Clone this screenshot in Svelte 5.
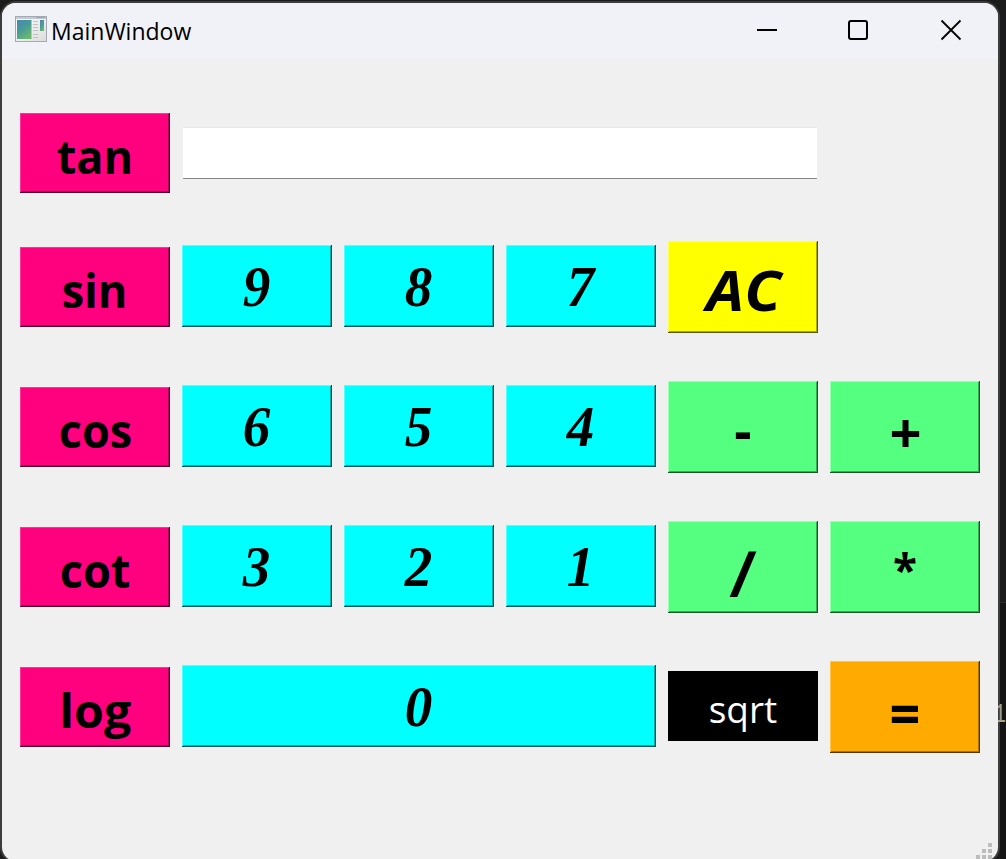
<script>
  const keys = [
    { label: 'sin', kind: 'fn', start: true },
    { label: '9', kind: 'digit' },
    { label: '8', kind: 'digit' },
    { label: '7', kind: 'digit' },
    { label: 'AC', kind: 'clear' },
    { label: 'cos', kind: 'fn', start: true },
    { label: '6', kind: 'digit' },
    { label: '5', kind: 'digit' },
    { label: '4', kind: 'digit' },
    { label: '-', kind: 'op', extra: 'minus' },
    { label: '+', kind: 'op', extra: 'plus' },
    { label: 'cot', kind: 'fn' },
    { label: '3', kind: 'digit' },
    { label: '2', kind: 'digit' },
    { label: '1', kind: 'digit' },
    { label: '/', kind: 'op', extra: 'slash' },
    { label: '*', kind: 'op', extra: 'star' },
    { label: 'log', kind: 'fn', extra: 'log' },
    { label: '0', kind: 'digit', wide: true },
    { label: 'sqrt', kind: 'root' },
    { label: '=', kind: 'equals' },
  ];
</script>

<div class="desktop">
  <div class="window">
    <header>
      <svg class="app-icon" width="32" height="26" viewBox="0 0 32 26">
        <defs>
          <linearGradient id="pane" x1="0" y1="0" x2="0.6" y2="1">
            <stop offset="0" stop-color="#4a86b4" />
            <stop offset="0.5" stop-color="#479a98" />
            <stop offset="1" stop-color="#68b870" />
          </linearGradient>
          <linearGradient id="frame" x1="0" y1="0" x2="1" y2="1">
            <stop offset="0" stop-color="#ffffff" />
            <stop offset="1" stop-color="#dcdcdc" />
          </linearGradient>
        </defs>
        <rect x="0.5" y="0.5" width="31" height="25" fill="url(#frame)" stroke="#a4a9b4" />
        <path d="M1 2H31" stroke="#c3cad6" stroke-width="2" />
        <path d="M21 1.5H30" stroke="#9ba5b5" />
        <rect x="2" y="4" width="14.5" height="19" fill="url(#pane)" />
        <rect x="25" y="4" width="4" height="11" fill="url(#pane)" />
        <path d="M18 5.5h5M18 8.5h5M18 11.5h5M18 14.5h5M18 18.5h5M18 21.5h5" stroke="#c2c2c2" />
      </svg>
      <span class="title">MainWindow</span>
      <svg class="controls" width="208" height="22" viewBox="0 0 208 22" fill="none" stroke="#000" stroke-width="2">
        <path d="M1 11H21" />
        <rect x="93" y="2" width="18" height="18" rx="2" />
        <path d="M185.5 1.5L204.5 20.5M204.5 1.5L185.5 20.5" stroke-width="1.8" />
      </svg>
    </header>
    <main>
      <button class="key fn"><span>tan</span></button>
      <input class="display" type="text" aria-label="Result" />
      {#each keys as k}
        <button class="key {k.kind} {k.extra ?? ''}" class:wide={k.wide} class:start={k.start}>
          <span>{k.label}</span>
        </button>
      {/each}
    </main>
    <svg class="grip" width="16" height="16" viewBox="0 0 16 16" fill="#bdbdbd">
      <path d="M12 0h4v4h-4zM6 6h4v4H6zM12 6h4v4h-4zM0 12h4v4H0zM6 12h4v4H6zM12 12h4v4h-4z" />
    </svg>
  </div>
  <div class="behind"><span>1</span></div>
</div>

<style>
  :global(body) { margin: 0; overflow: hidden; }
  .desktop {
    position: relative;
    width: 1006px;
    height: 859px;
    overflow: hidden;
    background: #1b1b1b;
  }
  .window {
    box-sizing: border-box;
    position: absolute;
    z-index: 1;
    left: 0;
    top: 1px;
    width: 1000px;
    height: 862px;
    border: 2px solid #3d3d3d;
    border-radius: 16px;
    overflow: hidden;
    background: #f0f0f0;
    font-family: "Open Sans", "Noto Sans", sans-serif;
  }
  header {
    box-sizing: border-box;
    height: 56px;
    display: flex;
    align-items: center;
    padding: 0 34px 2px 13px;
    background: #f1f2f8;
  }
  .app-icon { flex: none; transform: translateY(-1px); }
  .title {
    margin: 2px auto 0 4px;
    font: 23px/30px "Open Sans", sans-serif;
    color: #000;
  }
  main {
    display: grid;
    grid-template-columns: repeat(6, 150px);
    grid-template-rows: 80px repeat(4, 92px);
    column-gap: 12px;
    row-gap: 48px;
    align-items: center;
    padding: 54px 18px 0;
  }
  .display {
    grid-column: 2 / 6;
    box-sizing: border-box;
    width: 634px;
    height: 52px;
    margin: 0 0 0 1px;
    padding: 0 8px;
    border: 1px solid #e9e9e9;
    border-left-width: 0;
    border-right-width: 0;
    border-bottom-color: #868686;
    background: #fff;
    outline: none;
    font: 32px "Open Sans", sans-serif;
  }
  .key {
    box-sizing: border-box;
    margin: 0;
    padding: 0;
    height: 92px;
    border: 0;
    display: flex;
    align-items: center;
    justify-content: center;
    color: #000;
    background: var(--face);
    box-shadow: inset -1px -1px var(--dark), inset 1px 1px var(--light), inset -2px -2px var(--shade);
    font: bold 54px/1 "Open Sans", sans-serif;
  }
  .start { grid-column: 1; }
  .fn {
    --face: #ff007f; --light: #ff3399; --dark: #55002a; --shade: #aa0055;
    height: 80px;
    font-size: 46px;
  }
  .fn span { transform: translateY(3px) scaleX(0.98); }
  .log span { transform: translateY(3px) scaleX(1.05); }
  .digit {
    --face: #00ffff; --light: #55ffff; --dark: #005555; --shade: #00aaaa;
    height: 82px;
    margin-bottom: 2px;
    font: italic bold 58px/1 "Liberation Serif", serif;
  }
  .digit span { transform: translate(-1px, 1px) scaleX(0.95); }
  .wide { grid-column: span 3; }
  .clear {
    --face: #ffff00; --light: #ffff55; --dark: #555500; --shade: #aaaa00;
    font-style: italic;
    font-size: 56px;
  }
  .clear span { transform: translate(1px, 2px) scaleX(1.08); }
  .op { --face: #55ff7f; --light: #99ffb2; --dark: #1c552a; --shade: #39aa55; }
  .minus span { transform: translateY(2px); }
  .plus span { transform: translateY(4px) scale(1.04); }
  .slash span { transform: translateY(5px) skewX(-5deg) scale(1.05, 1.18); }
  .star { font-size: 44px; }
  .star span { transform: translateY(2px); }
  .root {
    --face: #000; --light: #000; --dark: #000; --shade: #000;
    height: 70px;
    margin-bottom: 2px;
    color: #fff;
    font-size: 37px;
    font-weight: 400;
  }
  .root span { transform: translateY(2px); }
  .equals { --face: #ffaa00; --light: #ffc44d; --dark: #553900; --shade: #aa7100; }
  .equals span { transform: translateY(5px) scale(1, 1.08); }
  .grip { position: absolute; left: 974px; top: 840px; }
  .behind {
    position: absolute;
    z-index: 2;
    right: 0;
    top: 602px;
    width: 6px;
    height: 257px;
    box-sizing: border-box;
    display: flex;
    justify-content: flex-end;
    padding-top: 100px;
    border-top: 1px solid #2b2b2b;
    background: #141414;
    color: #a5a18c;
    font: 20px/24px "Liberation Mono", monospace;
  }
  .behind span {
    flex: none;
    height: 24px;
    transform: scaleY(1.35);
    clip-path: inset(0 0 0 4px);
  }
</style>
